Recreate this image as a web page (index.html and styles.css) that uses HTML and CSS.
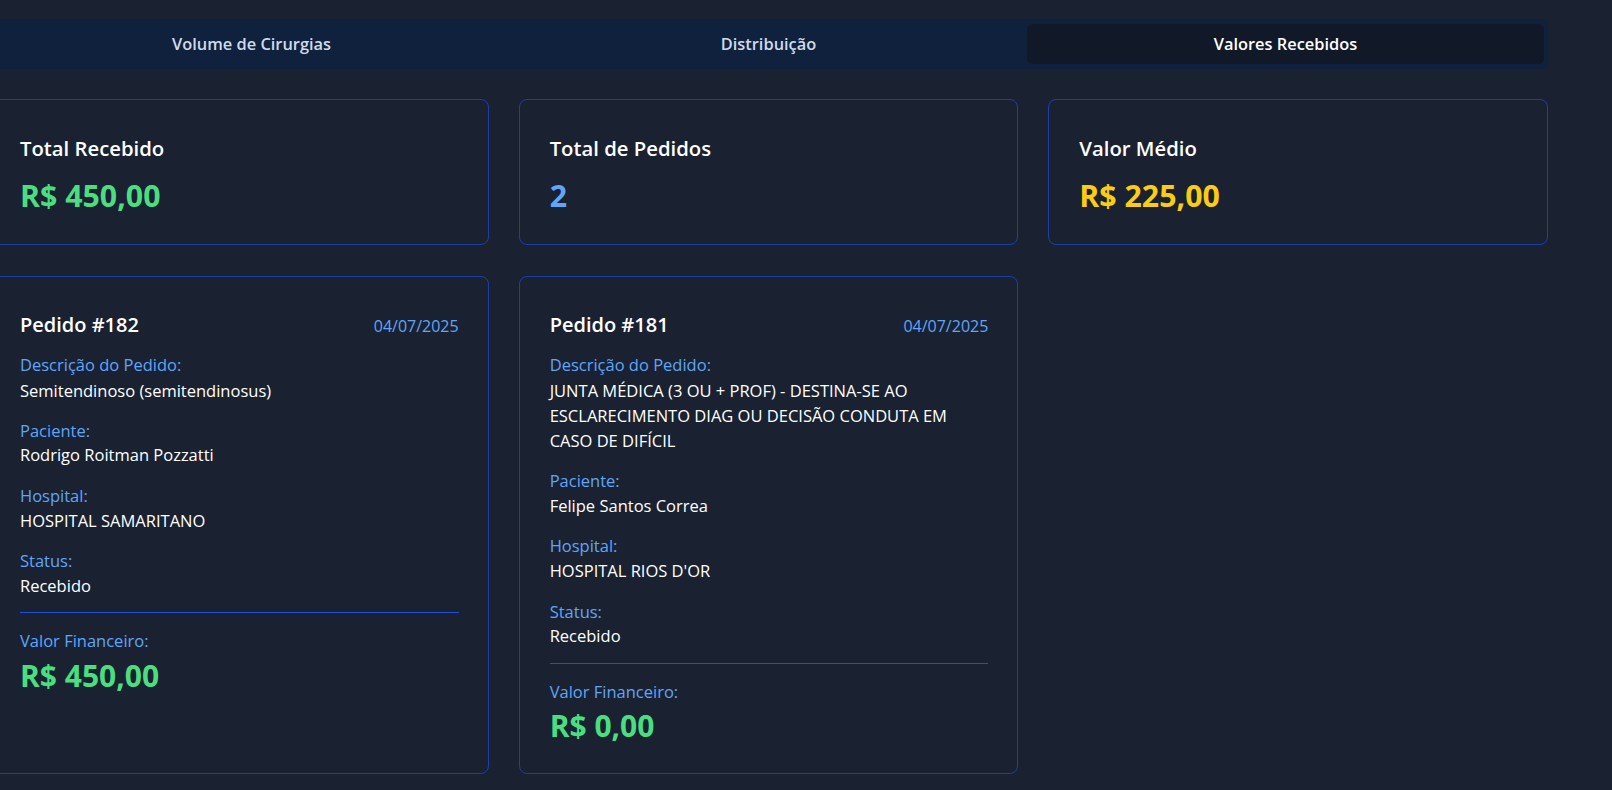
FILE: index.html
```html
<!DOCTYPE html>
<html lang="pt-BR">
<head>
<meta charset="utf-8">
<title>Valores Recebidos</title>
<link rel="stylesheet" href="styles.css">
</head>
<body>
<div class="page">
  <div class="tabs">
    <div class="tab">Volume de Cirurgias</div>
    <div class="tab">Distribuição</div>
    <div class="tab active">Valores Recebidos</div>
  </div>

  <div class="stats">
    <div class="card stat">
      <div class="stat-title">Total Recebido</div>
      <div class="stat-value green">R$ 450,00</div>
    </div>
    <div class="card stat">
      <div class="stat-title">Total de Pedidos</div>
      <div class="stat-value blue">2</div>
    </div>
    <div class="card stat">
      <div class="stat-title">Valor Médio</div>
      <div class="stat-value yellow">R$ 225,00</div>
    </div>
  </div>

  <div class="orders">
    <div class="card order">
      <div class="order-head">
        <div class="order-title">Pedido #182</div>
        <div class="order-date">04/07/2025</div>
      </div>
      <div class="fields">
        <div class="field">
          <div class="label">Descrição do Pedido:</div>
          <div class="value desc">Semitendinoso (semitendinosus)</div>
        </div>
        <div class="field">
          <div class="label">Paciente:</div>
          <div class="value">Rodrigo Roitman Pozzatti</div>
        </div>
        <div class="field">
          <div class="label">Hospital:</div>
          <div class="value">HOSPITAL SAMARITANO</div>
        </div>
        <div class="field">
          <div class="label">Status:</div>
          <div class="value">Recebido</div>
        </div>
      </div>
      <div class="finance">
        <div class="label">Valor Financeiro:</div>
        <div class="finance-value">R$ 450,00</div>
      </div>
    </div>

    <div class="card order">
      <div class="order-head">
        <div class="order-title">Pedido #181</div>
        <div class="order-date">04/07/2025</div>
      </div>
      <div class="fields">
        <div class="field">
          <div class="label">Descrição do Pedido:</div>
          <div class="value desc">JUNTA MÉDICA (3 OU + PROF) - DESTINA-SE AO ESCLARECIMENTO DIAG OU DECISÃO CONDUTA EM CASO DE DIFÍCIL</div>
        </div>
        <div class="field">
          <div class="label">Paciente:</div>
          <div class="value">Felipe Santos Correa</div>
        </div>
        <div class="field">
          <div class="label">Hospital:</div>
          <div class="value">HOSPITAL RIOS D'OR</div>
        </div>
        <div class="field">
          <div class="label">Status:</div>
          <div class="value">Recebido</div>
        </div>
      </div>
      <div class="finance">
        <div class="label">Valor Financeiro:</div>
        <div class="finance-value">R$ 0,00</div>
      </div>
    </div>
  </div>
</div>
</body>
</html>
```

FILE: styles.css
```css
* {
  box-sizing: border-box;
}

html, body {
  margin: 0;
  padding: 0;
  background: #1a2231;
  overflow: hidden;
}

body {
  font-family: "Open Sans", "Noto Sans", "DejaVu Sans", sans-serif;
  color: #ffffff;
  font-size: 16px;
  line-height: 24px;
}

.page {
  width: 1559px;
  margin-left: -11px;
  padding-top: 19px;
}

.tabs {
  display: grid;
  grid-template-columns: repeat(3, 1fr);
  height: 50px;
  padding: 5px 4px;
  background: #0f213d;
  border-radius: 6px;
}

.tab {
  display: flex;
  align-items: center;
  justify-content: center;
  height: 40px;
  border-radius: 6px;
  font-size: 16.4px;
  font-weight: 600;
  color: #d0dbea;
}

.tab.active {
  background: #111827;
  color: #ffffff;
}

.stats {
  display: grid;
  grid-template-columns: repeat(3, 1fr);
  gap: 30px;
  margin-top: 30px;
}

.card {
  border: 1px solid #1e3fa6;
  border-radius: 8px;
  padding: 34px 29px 30px 30px;
  background: #1a2231;
}

.order {
  padding-bottom: 28.5px;
}

.stat-title {
  font-size: 20.3px;
  line-height: 28px;
  font-weight: 600;
  color: #ffffff;
}

.stat-value {
  margin-top: 16px;
  font-size: 30.3px;
  line-height: 36px;
  font-weight: 700;
}

.green { color: #4ade80; }
.blue { color: #60a5fa; }
.yellow { color: #facc15; }

.orders {
  display: grid;
  grid-template-columns: repeat(3, 1fr);
  gap: 30px;
  margin-top: 31px;
}

.order-head {
  display: flex;
  justify-content: space-between;
  align-items: baseline;
  margin-bottom: 14px;
}

.order-title {
  font-size: 20px;
  line-height: 28px;
  font-weight: 600;
}

.order-date {
  color: #60a5fa;
}

.fields {
  display: flex;
  flex-direction: column;
  gap: 16px;
}

.label {
  color: #60a5fa;
  font-size: 16.5px;
  line-height: 24.6px;
}

.value {
  color: #ffffff;
  font-size: 16.5px;
  line-height: 24.6px;
}

.value.desc {
  max-width: 428px;
  line-height: 25.2px;
}

.finance {
  margin-top: 14px;
  padding-top: 16px;
  border-top: 1px solid #1d4ed8;
}

.finance-value {
  margin-top: 4px;
  font-size: 30px;
  line-height: 36px;
  font-weight: 700;
  color: #4ade80;
}
```
